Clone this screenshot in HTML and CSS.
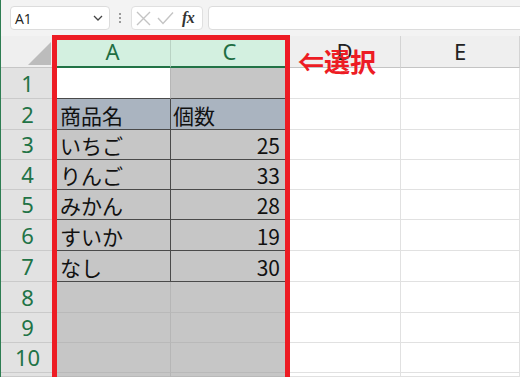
FILE: index.html
```html
<!DOCTYPE html>
<html lang="ja">
<head>
<meta charset="utf-8">
<link rel="stylesheet" href="styles.css">
</head>
<body>
<div class="app">
  <div class="topbar">
    <div class="namebox">
      <span class="ref">A1</span>
      <svg class="chev" width="10" height="6" viewBox="0 0 10 6"><polyline points="1,1 5,5 9,1" fill="none" stroke="#444" stroke-width="1.3"/></svg>
    </div>
    <div class="grip"><i></i><i></i><i></i></div>
    <div class="fbtns">
      <svg width="15" height="15" viewBox="0 0 15 15"><path d="M1 1 L14 14 M14 1 L1 14" stroke="#c4c4c4" stroke-width="1.4" fill="none"/></svg>
      <svg width="17" height="14" viewBox="0 0 17 14"><polyline points="1,7 6,12.5 16,1.5" fill="none" stroke="#c4c4c4" stroke-width="1.4"/></svg>
      <span class="fx">fx</span>
    </div>
    <div class="finput"></div>
  </div>

  <div class="sheet">
    <div class="c corner"><svg width="23" height="23" viewBox="0 0 23 23"><polygon points="23,0 23,23 0,23" fill="#bcbcbc"/></svg></div>
    <div class="c hd on">A</div>
    <div class="c hd on">C</div>
    <div class="c hd">D</div>
    <div class="c hd">E</div>

    <div class="c rh">1</div>
    <div class="c act tb"></div>
    <div class="c s tb"></div>
    <div class="c"></div>
    <div class="c"></div>

    <div class="c rh">2</div>
    <div class="c s t2 tb tr pa">商品名</div>
    <div class="c s t2 tb pc">個数</div>
    <div class="c"></div>
    <div class="c"></div>

    <div class="c rh">3</div>
    <div class="c s tb tr pa">いちご</div>
    <div class="c s tb num">25</div>
    <div class="c"></div>
    <div class="c"></div>

    <div class="c rh">4</div>
    <div class="c s tb tr pa">りんご</div>
    <div class="c s tb num">33</div>
    <div class="c"></div>
    <div class="c"></div>

    <div class="c rh">5</div>
    <div class="c s tb tr pa">みかん</div>
    <div class="c s tb num">28</div>
    <div class="c"></div>
    <div class="c"></div>

    <div class="c rh">6</div>
    <div class="c s tb tr pa">すいか</div>
    <div class="c s tb num">19</div>
    <div class="c"></div>
    <div class="c"></div>

    <div class="c rh">7</div>
    <div class="c s tb tr pa">なし</div>
    <div class="c s tb num">30</div>
    <div class="c"></div>
    <div class="c"></div>

    <div class="c rh">8</div>
    <div class="c s"></div>
    <div class="c s"></div>
    <div class="c"></div>
    <div class="c"></div>

    <div class="c rh">9</div>
    <div class="c s"></div>
    <div class="c s"></div>
    <div class="c"></div>
    <div class="c"></div>

    <div class="c rh">10</div>
    <div class="c s"></div>
    <div class="c s"></div>
    <div class="c"></div>
    <div class="c"></div>

    <div class="c rh"></div>
    <div class="c s"></div>
    <div class="c s"></div>
    <div class="c"></div>
    <div class="c"></div>
  </div>

  <div class="selbox"></div>
  <div class="note">⇐選択</div>
</div>
</body>
</html>
```

FILE: styles.css
```css
html, body {
  margin: 0;
  padding: 0;
  background: #ffffff;
}

.app {
  position: relative;
  width: 519px;
  height: 377px;
  overflow: hidden;
  border-left: 1px solid #2e7d52;
  background: #f3f3f3;
  font-family: "Noto Sans", "Noto Sans CJK JP", sans-serif;
}

/* ---------- formula bar ---------- */
.topbar {
  height: 36px;
  box-sizing: border-box;
  display: flex;
  align-items: flex-start;
  padding: 6px 0 0 9px;
}

.namebox {
  width: 100px;
  height: 24px;
  box-sizing: border-box;
  background: #fff;
  border: 1px solid #dcdcdc;
  border-radius: 4px;
  display: flex;
  align-items: center;
  justify-content: space-between;
  padding: 0 6px 0 4px;
}

.ref {
  font-family: "Open Sans", "Noto Sans", sans-serif;
  font-size: 14px;
  color: #222;
}

.grip {
  margin-left: 9px;
  height: 24px;
  display: flex;
  flex-direction: column;
  justify-content: center;
  gap: 2px;
}

.grip i {
  display: block;
  width: 2px;
  height: 2px;
  background: #9a9a9a;
}

.fbtns {
  margin-left: 10px;
  width: 72px;
  height: 24px;
  box-sizing: border-box;
  background: #fff;
  border: 1px solid #e0e0e0;
  border-radius: 4px;
  display: flex;
  align-items: center;
  gap: 6px;
  padding-left: 4px;
}

.fx {
  font-family: "Liberation Serif", serif;
  font-style: italic;
  font-weight: bold;
  font-size: 16px;
  color: #333;
  margin-left: 2px;
  letter-spacing: -0.5px;
}

.finput {
  flex: 1;
  margin-left: 5px;
  margin-right: -6px;
  height: 24px;
  box-sizing: border-box;
  background: #fff;
  border: 1px solid #dcdcdc;
  border-radius: 4px;
}

/* ---------- sheet grid ---------- */
.sheet {
  display: grid;
  grid-template-columns: 54px 116px 118px 112px 1fr;
  grid-template-rows: 32px 31px 31px 30px 30px 30px 31px 31px 31px 30px 30px 1fr;
  height: 341px;
  background: #fff;
}

.c {
  box-sizing: border-box;
  border-right: 1px solid #e1e1e1;
  border-bottom: 1px solid #e1e1e1;
  display: flex;
  align-items: flex-end;
  font-family: "Noto Sans CJK JP", "Noto Sans", sans-serif;
  font-size: 21px;
  line-height: 1;
  color: #111;
  padding-bottom: 3px;
  background: #fff;
  overflow: hidden;
}

.corner {
  background: #efefef;
  border-right: 1px solid #d0d0d0;
  border-bottom: 1px solid #c6c6c6;
  justify-content: flex-end;
  padding: 0 3px 2px 0;
}

.corner svg {
  display: block;
}

.hd {
  background: #efefef;
  border-right: 1px solid #d4d4d4;
  border-bottom: 1px solid #c4c4c4;
  justify-content: center;
  align-items: center;
  padding: 0 0 1px;
  font-family: "Noto Sans", sans-serif;
  font-size: 22px;
  color: #222;
}

.hd.on {
  background: #d3f0e0;
  color: #1f6e43;
  border-right-color: #b9d3c4;
  border-bottom: 2px solid #217346;
}

.rh {
  background: #e2e2e2;
  border-right: 1px solid #c0c0c0;
  border-bottom: 1px solid #cacaca;
  justify-content: center;
  align-items: center;
  padding: 0 0 1px;
  font-family: "Noto Sans", sans-serif;
  font-size: 22px;
  color: #217346;
}

.s {
  background: #c6c6c6;
  border-right-color: #b6b6b6;
  border-bottom-color: #b9b9b9;
}

.act {
  background: #fff;
  border-right-color: #b6b6b6;
}

.t2 {
  background: #aab4c0;
}

.tb {
  border-bottom-color: #4a4a4a;
}

.tr {
  border-right-color: #4a4a4a;
}

.pa {
  padding-left: 5px;
}

.pc {
  padding-left: 2px;
}

.num {
  justify-content: flex-end;
  padding-right: 8px;
}

/* ---------- annotation overlays ---------- */
.selbox {
  position: absolute;
  left: 51px;
  top: 35px;
  width: 238px;
  height: 400px;
  box-sizing: border-box;
  border: 5px solid #ed1c24;
}

.note {
  position: absolute;
  left: 297px;
  top: 48px;
  font-family: "Noto Sans CJK JP", sans-serif;
  font-weight: bold;
  font-size: 26px;
  line-height: 1;
  color: #ed1c24;
}
```
